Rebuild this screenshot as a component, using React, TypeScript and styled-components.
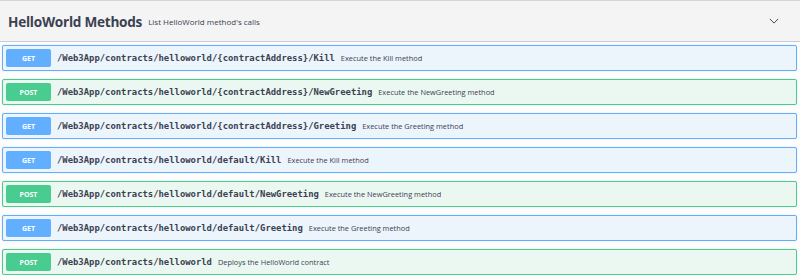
import styled, { createGlobalStyle } from 'styled-components';

type Method = 'get' | 'post';

interface Endpoint {
  method: Method;
  path: string;
  summary: string;
}

const endpoints: Endpoint[] = [
  { method: 'get', path: '/Web3App/contracts/helloworld/{contractAddress}/Kill', summary: 'Execute the Kill method' },
  { method: 'post', path: '/Web3App/contracts/helloworld/{contractAddress}/NewGreeting', summary: 'Execute the NewGreeting method' },
  { method: 'get', path: '/Web3App/contracts/helloworld/{contractAddress}/Greeting', summary: 'Execute the Greeting method' },
  { method: 'get', path: '/Web3App/contracts/helloworld/default/Kill', summary: 'Execute the Kill method' },
  { method: 'post', path: '/Web3App/contracts/helloworld/default/NewGreeting', summary: 'Execute the NewGreeting method' },
  { method: 'get', path: '/Web3App/contracts/helloworld/default/Greeting', summary: 'Execute the Greeting method' },
  { method: 'post', path: '/Web3App/contracts/helloworld', summary: 'Deploys the HelloWorld contract' },
];

const palette = {
  get: { main: '#61affe', bg: '#ecf4fc' },
  post: { main: '#49cc90', bg: '#ebf8f1' },
};

const App = () => {
  return (
    <>
      <GlobalStyle />
      <Section>
        <TagHeader>
          <Title>HelloWorld Methods</Title>
          <TagDescription>List HelloWorld method's calls</TagDescription>
          <Chevron width="12" height="12" viewBox="0 0 20 20">
            <path d="M3 6.5 L10 13.5 L17 6.5" fill="none" stroke="#3b4151" strokeWidth="1.6" />
          </Chevron>
        </TagHeader>
        <OpList>
          {endpoints.map((endpoint, index) => (
            <OpBlock key={index} $method={endpoint.method}>
              <MethodBadge $method={endpoint.method}>{endpoint.method.toUpperCase()}</MethodBadge>
              <PathText>{endpoint.path}</PathText>
              <Summary>{endpoint.summary}</Summary>
            </OpBlock>
          ))}
        </OpList>
      </Section>
    </>
  );
};

const GlobalStyle = createGlobalStyle`
  body {
    margin: 0;
    background: #fdfdfd;
    font-family: 'Open Sans', 'Liberation Sans', sans-serif;
    color: #3b4151;
  }
`;

const Section = styled.div`
  width: 800px;
`;

const TagHeader = styled.div`
  display: flex;
  align-items: center;
  height: 40px;
  padding: 0 8px;
  background: #f4f4f4;
  border-top: 1px solid #d6d6d6;
  border-bottom: 1px solid #c9ccd3;
`;

const Title = styled.span`
  font-size: 13.6px;
  font-weight: 700;
  letter-spacing: -0.25px;
  color: #3b4151;
  margin-top: 1px;
`;

const TagDescription = styled.span`
  font-size: 8px;
  margin-left: 6px;
  color: #3b4151;
  flex: 1;
`;

const Chevron = styled.svg`
  margin-right: 12px;
`;

const OpList = styled.div`
  display: flex;
  flex-direction: column;
  gap: 8px;
  padding: 3px 3px 0 2px;
`;

const OpBlock = styled.div<{ $method: Method }>`
  display: flex;
  align-items: center;
  height: 26px;
  box-sizing: border-box;
  padding: 0 3px;
  border: 1px solid ${(p) => palette[p.$method].main};
  border-radius: 2px;
  background: ${(p) => palette[p.$method].bg};
  box-shadow: 0 0 2px rgba(0, 0, 0, 0.12);
`;

const MethodBadge = styled.span<{ $method: Method }>`
  display: flex;
  align-items: center;
  justify-content: center;
  width: 45px;
  height: 18px;
  border-radius: 2px;
  background: ${(p) => palette[p.$method].main};
  color: #fff;
  font-size: 7px;
  font-weight: 700;
`;

const PathText = styled.span`
  margin-left: 6px;
  font-family: 'DejaVu Sans Mono', 'Liberation Mono', monospace;
  font-size: 8.9px;
  font-weight: 700;
  color: #3b4151;
`;

const Summary = styled.span`
  margin-left: 6px;
  font-size: 7.4px;
  color: #3b4151;
`;

export default App;
